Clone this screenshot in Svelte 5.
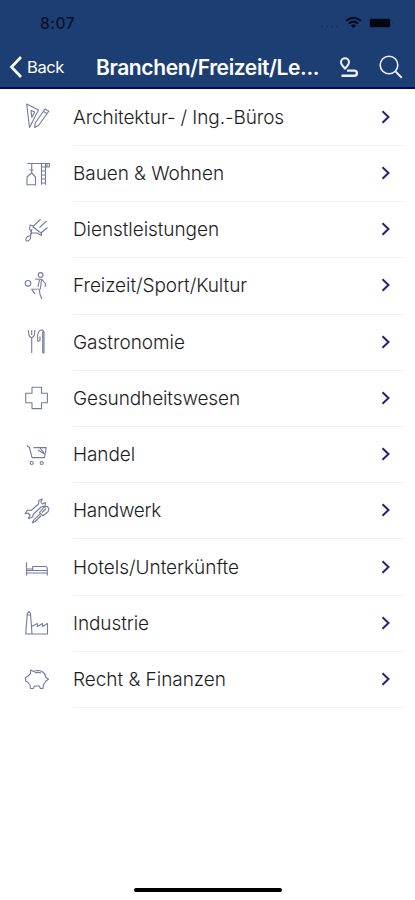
<script>
  const rows = [
    { label: 'Architektur- / Ing.-Büros', width: 211, icon: 'M4.7 2 7.5 25.5 16.5 8ZM9 8.5l.8 7 2.8-5.5ZM12.7 25.5l.5-4.5L23 7l3.8 2.2L16.5 23.5ZM21.5 9.5l3.8 2.2' },
    { label: 'Bauen & Wohnen', width: 151, icon: 'M5.3 4.5H27.3V8H23M9.7 4.5V11M7.5 11h4M9.7 11v3L5 18v7.8H13.5V18L9.7 14M19.5 25.8V4.5M23.5 25.8V4.5M19.5 8h4M19.5 12h4M19.5 16h4M19.5 20h4M19.5 24h4M25 4.5V8' },
    { label: 'Dienstleistungen', width: 146, icon: 'M18.7 4.2 11.5 11 8.2 10 7.5 14 10 18M24.7 5.9 17.5 12.5M25.5 12.5 19.5 17.5V20.5L15 18 10 18M10.5 11.5 19 18M10 18 8 20.8M10 14 8.5 20M4 23.5Q5 20.5 8.5 21 9.5 24 6 26 3.5 26.5 4 23.5' },
    { label: 'Freizeit/Sport/Kultur', width: 174, icon: 'M21 4a2.4 2.4 0 1 1-4.8 0 2.4 2.4 0 0 1 4.8 0M8.8 12.3a2.8 2.8 0 1 1-5.6 0 2.8 2.8 0 0 1 5.6 0M13 8l7 .5 3.3 4v3.2M19.5 9l-1.2 9-8.6.3 3.3 4.5M17.3 18.5l.7 5 2 4.5M17.5 9l-1.5 7' },
    { label: 'Gastronomie', width: 112, icon: 'M6.3 3l.7 5.5 2.7 2.7L12.3 8.5l.7-5.5M9.7 3v5M9.7 11V26M20.7 26V4.5M15.7 14.5V8Q16.5 3 20.5 2.8L22 5V26H20.7M15.7 14.5l2.3-1V9.5' },
    { label: 'Gesundheitswesen', width: 167, icon: 'M10 4.3h9.5v5.9h5.9v9.5h-5.9v5.9H10v-5.9H3.7v-9.5H10Z' },
    { label: 'Handel', width: 62, icon: 'M4.7 5.5 7.5 7.5 10 17.6H22.5L24.2 7.6H11.5M16 10l6.5 4M18 8l4 5M11.2 23a1.5 1.5 0 1 1-3 0 1.5 1.5 0 0 1 3 0M21.2 23a1.5 1.5 0 1 1-3 0 1.5 1.5 0 0 1 3 0' },
    { label: 'Handwerk', width: 88, icon: 'M3 17.8 5.5 14 9 14.5 16.5 8 17 4.3 20.3 3 18.8 6 20.5 8 23.5 6.5 23 10 19 11 11.5 18 10.5 21 6.5 22.5 8 19 6 17ZM10 27l2-3.3 6-5.5M10 27l3.2-1.5 6-6M17.5 16.5l4-5 3.5-1.2 2 2-1 3.5-5 4ZM20 16.5l4-4' },
    { label: 'Hotels/Unterkünfte', width: 166, icon: 'M4.5 10.2V23.5M4.5 18.5H25.3V23.5M4.5 21H25M10.7 18.5V14.5H24L25.3 16V18.5M4.5 17H10.7' },
    { label: 'Industrie', width: 76, icon: 'M3.7 26 5.3 5.5 6.8 3.5 8.5 5.5 10 26ZM10 26H25.5V15.5L20.5 18.5V15.5L15.3 18.5V15.5L9.5 18.5M5 7h4' },
    { label: 'Recht & Finanzen', width: 153, icon: 'M8.5 6 11.5 7.5Q16 5.5 20 7.5 23.5 9.5 24 13.5L26.5 15.2 24 17 21.5 20.5 21 24.5H18.5L17.3 22H12.5L11.2 24.5H8.5L8 21 5.5 18 3.5 17V13.5L6 12 8.5 9.5ZM12.5 9Q16 7.8 19 9' }
  ];

  // Spread each label's glyphs evenly across its measured line width.
  function fit(node, target) {
    node.style.letterSpacing = '0px';
    const natural = node.getBoundingClientRect().width;
    node.style.letterSpacing = `${(target - natural) / node.textContent.length}px`;
  }
</script>

<div class="screen">
  <header>
    <div class="status">
      <span class="time" use:fit={35}>8:07</span>
      <svg class="system" width="80" height="16" viewBox="0 0 80 16">
        <g fill="#17305f"><circle cx="5" cy="11.5" r="1"/><circle cx="10" cy="11.5" r="1"/><circle cx="15" cy="11.5" r="1"/><circle cx="20" cy="11.5" r="1"/></g>
        <g fill="none" stroke="#050d20" stroke-width="2"><path d="M29.2 5.8Q36.5-.3 43.8 5.8M31.8 8.6Q36.5 4.6 41.2 8.6"/></g>
        <path d="M33.8 10.4Q36.5 8.3 39.2 10.4L36.5 13.3Z" fill="#050d20"/>
        <rect x="52.5" y="3.5" width="21" height="9" rx="2" fill="#03060f" stroke="#173360"/>
        <path d="M75.5 6v4q1.6-2 0-4" fill="#152b57"/>
      </svg>
    </div>
    <nav>
      <svg class="back" width="14" height="24" viewBox="0 0 14 24"><path d="M12 2 2.5 12 12 22" fill="none" stroke="#fff" stroke-width="2.7"/></svg>
      <span class="back-label"><span use:fit={37}>Back</span></span>
      <h1><span use:fit={223}>Branchen/Freizeit/Le...</span></h1>
      <svg class="route" width="22" height="24" viewBox="0 0 22 24" fill="none" stroke="#edf1fc" stroke-width="2"><path d="M7 13.5Q3 9.5 3 7.2a4 4 0 0 1 8 0Q11 9.5 7 13.5Z"/><path d="M9 15.6H16.3a2.6 2.6 0 0 1 0 5.2H3.5" stroke-width="2.4"/></svg>
      <svg class="search" width="24" height="24" viewBox="0 0 24 24" fill="none" stroke="#edf1fc" stroke-width="1.6"><circle cx="10" cy="10" r="8.8"/><path d="m16.4 16.4 6.3 6.3" stroke-width="2"/></svg>
    </nav>
  </header>

  <ul>
    {#each rows as row}
      <li>
        <svg class="icon" width="30" height="30" viewBox="0 0 30 30"><path d={row.icon}/></svg>
        <div class="entry">
          <span class="label" use:fit={row.width}>{row.label}</span>
          <svg class="chevron" width="10" height="14" viewBox="0 0 10 14"><path d="m1.5 1.2 6 5.8-6 5.8"/></svg>
        </div>
      </li>
    {/each}
  </ul>

  <footer><div class="home"></div></footer>
</div>

<style>
  :global(body) { margin: 0; background: #fff; }
  .screen { width: 415px; height: 900px; display: flex; flex-direction: column; background: #fff; font-family: Inter, Roboto, sans-serif; overflow: hidden; }
  header { height: 89px; box-sizing: border-box; flex: none; background: #1d3e72; border-bottom: 2px solid #05065f; }
  .status { height: 46px; display: flex; justify-content: space-between; align-items: center; padding: 0 18.5px 0 40px; box-sizing: border-box; }
  .time { color: #07122a; font-size: 15.5px; font-weight: 500; white-space: nowrap; }
  .system { display: block; }
  nav { height: 41px; display: flex; align-items: center; color: #fff; padding-left: 9px; }
  svg { flex: none; }
  .back-label { width: 69px; padding-left: 4px; box-sizing: border-box; font-size: 16.5px; white-space: nowrap; }
  .back-label span { display: inline-block; }
  h1 { width: 244px; margin: 0 0 0 4px; font-size: 21px; line-height: 26px; padding-top: 2px; font-weight: 600; white-space: nowrap; }
  h1 span { display: inline-block; }
  .route { margin-left: -2px; }
  .search { margin-left: 19px; }
  ul { list-style: none; margin: 0; padding: .7px 0 0; }
  li { height: 56.22px; display: flex; padding-left: 22px; }
  .icon { margin-top: 12.6px; }
  .icon path { fill: none; stroke: #747a9e; stroke-width: 1.1; stroke-linejoin: round; }
  .entry { width: 332px; height: 100%; box-sizing: border-box; margin-left: 21px; border-bottom: 1px solid #f1f1f2; display: flex; align-items: center; justify-content: space-between; padding-right: 14.5px; }
  .label { color: #1c1c1e; font-size: 19px; font-weight: 300; white-space: nowrap; }
  .chevron { margin-bottom: 1px; }
  .chevron path { fill: none; stroke: #29207e; stroke-width: 2; }
  footer { margin-top: auto; height: 12px; display: flex; justify-content: center; }
  .home { width: 148px; height: 4px; border-radius: 2px; background: #000; }
</style>
